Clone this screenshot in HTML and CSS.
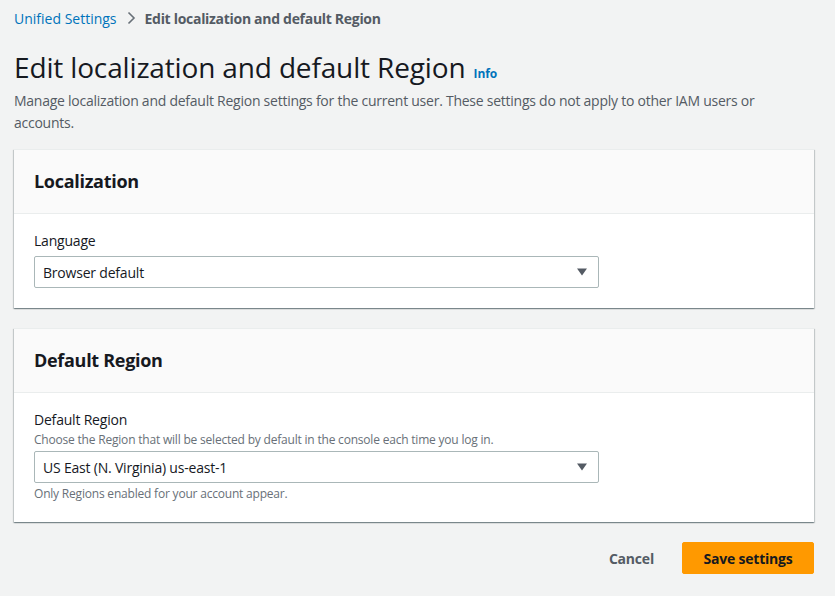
FILE: index.html
```html
<!DOCTYPE html>
<html lang="en">
<head>
<meta charset="utf-8">
<title>Edit localization and default Region</title>
<link rel="stylesheet" href="styles.css">
</head>
<body>
<div class="page">
  <nav class="breadcrumbs">
    <a class="crumb-link" href="#">Unified Settings</a>
    <svg class="crumb-sep" width="16" height="16" viewBox="0 0 16 16"><path d="M5.5 2.5 11 8l-5.5 5.5" fill="none" stroke="#687078" stroke-width="1.6"/></svg>
    <span class="crumb-current">Edit localization and default Region</span>
  </nav>
  <header class="page-header">
    <h1 class="title">Edit localization and default Region <a class="info" href="#">Info</a></h1>
    <p class="desc">Manage localization and default Region settings for the current user. These settings do not apply to other IAM users or accounts.</p>
  </header>

  <section class="card">
    <div class="card-header"><h2>Localization</h2></div>
    <div class="card-body">
      <div class="label">Language</div>
      <div class="select">
        <span>Browser default</span>
        <svg class="caret" width="12" height="8" viewBox="0 0 12 8"><path d="M1 0.5h10L6 7.5z" fill="#545b64"/></svg>
      </div>
    </div>
  </section>

  <section class="card">
    <div class="card-header"><h2>Default Region</h2></div>
    <div class="card-body">
      <div class="label">Default Region</div>
      <div class="hint">Choose the Region that will be selected by default in the console each time you log in.</div>
      <div class="select">
        <span>US East (N. Virginia) us-east-1</span>
        <svg class="caret" width="12" height="8" viewBox="0 0 12 8"><path d="M1 0.5h10L6 7.5z" fill="#545b64"/></svg>
      </div>
      <div class="constraint">Only Regions enabled for your account appear.</div>
    </div>
  </section>

  <div class="actions">
    <button class="btn-link">Cancel</button>
    <button class="btn-primary">Save settings</button>
  </div>
</div>
</body>
</html>
```

FILE: styles.css
```css
html, body {
  margin: 0;
  padding: 0;
  background: #f2f3f3;
}
body {
  font-family: "Open Sans", "Noto Sans", sans-serif;
  color: #16191f;
  font-size: 14px;
}
.page {
  width: 800px;
  margin-left: 14px;
  padding-top: 7px;
}
.breadcrumbs {
  display: flex;
  align-items: center;
  gap: 5px;
  height: 22px;
  font-size: 14px;
  letter-spacing: -0.2px;
}
.crumb-link {
  color: #0073bb;
  text-decoration: none;
  letter-spacing: 0;
}
.crumb-sep {
  margin: 0 1px;
}
.crumb-current {
  color: #545b64;
  font-weight: 700;
  letter-spacing: -0.3px;
}
.page-header {
  margin-top: 20px;
}
.title {
  margin: 0;
  font-size: 28px;
  font-weight: 400;
  line-height: 36px;
  letter-spacing: -0.15px;
  color: #16191f;
}
.info {
  font-size: 12px;
  font-weight: 700;
  color: #0073bb;
  text-decoration: none;
  letter-spacing: -0.1px;
  margin-left: 1px;
}
.desc {
  margin: -2px 0 0;
  font-size: 14px;
  line-height: 22px;
  color: #545b64;
  letter-spacing: -0.25px;
  padding-right: 20px;
}
.card {
  background: #fff;
  margin-top: 15px;
  border-top: 1px solid #eaeded;
  box-shadow: 0 1px 1px 0 rgba(0, 28, 36, 0.3), 1px 1px 1px 0 rgba(0, 28, 36, 0.15), -1px 1px 1px 0 rgba(0, 28, 36, 0.15);
}
.card + .card {
  margin-top: 20px;
}
.card-header {
  background: #fafafa;
  border-bottom: 1px solid #eaeded;
  padding: 19px 20px 19px;
}
.card-header h2 {
  margin: 0;
  font-size: 18px;
  line-height: 25px;
  font-weight: 700;
  letter-spacing: -0.3px;
}
.card-body {
  padding: 16px 20px 20px;
}
.label {
  font-size: 14px;
  line-height: 22px;
  letter-spacing: -0.2px;
}
.hint, .constraint {
  font-size: 12px;
  line-height: 16px;
  color: #687078;
  letter-spacing: -0.2px;
}
.hint {
  margin-top: 1px;
  margin-bottom: 3px;
}
.label + .select {
  margin-top: 4px;
}
.constraint {
  margin-top: 3px;
}
.select {
  width: 565px;
  box-sizing: border-box;
  height: 32px;
  border: 1px solid #aab7b8;
  border-radius: 2px;
  display: flex;
  align-items: center;
  justify-content: space-between;
  padding: 0 10px 0 8px;
  font-size: 14px;
  letter-spacing: -0.2px;
  background: #fff;
}
.actions {
  display: flex;
  justify-content: flex-end;
  align-items: center;
  gap: 8px;
  margin-top: 20px;
}
.btn-link, .btn-primary {
  font-family: inherit;
  font-size: 14px;
  font-weight: 700;
  height: 32px;
  border-radius: 2px;
  cursor: pointer;
  letter-spacing: -0.2px;
}
.btn-link {
  background: transparent;
  border: none;
  color: #545b64;
  padding: 0 20px;
}
.btn-primary {
  background: #ff9900;
  border: 1px solid #ff9900;
  color: #16191f;
  padding: 0 20px;
  width: 132px;
}
```
